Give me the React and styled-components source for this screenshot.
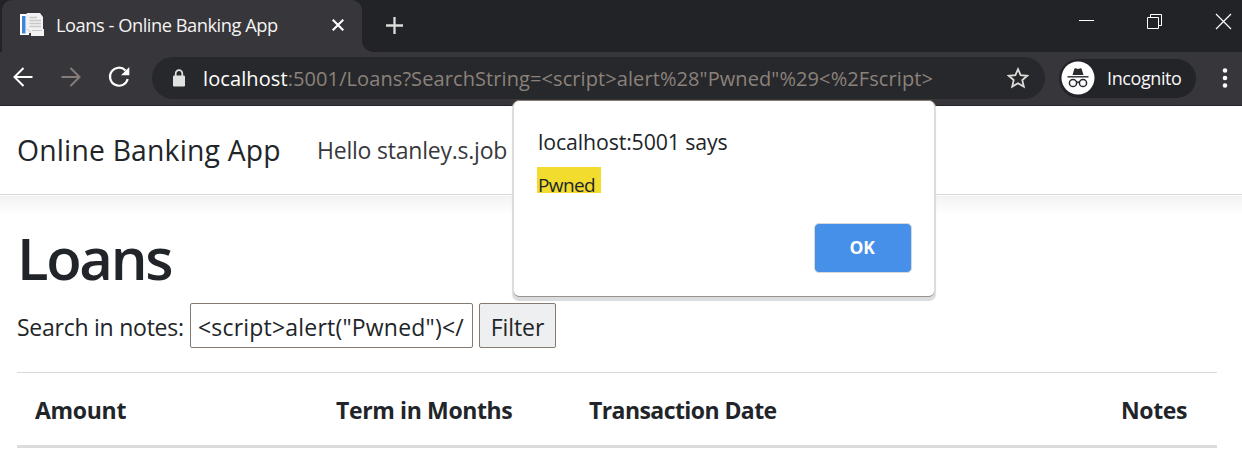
import React from "react";
import styled, { createGlobalStyle } from "styled-components";

const GlobalStyle = createGlobalStyle`
  * { box-sizing: border-box; }
  body {
    margin: 0;
    background: #fff;
    color: #212529;
    font-family: "Open Sans", "Noto Sans", sans-serif;
    overflow: hidden;
  }
`;

const Window = styled.div`
  position: relative;
  width: 1242px;
  height: 465px;
  overflow: hidden;
  background: #fff;
`;

const Label = styled.span`
  display: block;
  flex: none;
  white-space: pre;
  font-size: ${(p) => p.$size}px;
  line-height: ${(p) => p.$line}px;
  letter-spacing: ${(p) => p.$track || 0}px;
  font-weight: ${(p) => p.$weight || 400};
  color: ${(p) => p.$color || "#212529"};
`;

const TabStrip = styled.header`
  display: flex;
  height: 52px;
  background: #222327;
`;

const Tab = styled.div`
  position: relative;
  display: flex;
  width: 360px;
  height: 52px;
  margin-left: 2px;
  padding: 0 17px 2px 18px;
  align-items: center;
  background: #37363a;
  border-radius: 10px 10px 0 0;

  &::after {
    content: "";
    position: absolute;
    left: 100%;
    bottom: 0;
    width: 11px;
    height: 11px;
    background: radial-gradient(circle at 100% 0, transparent 10.5px, #37363a 11px);
  }
`;

const TabTitle = styled.div`
  width: 276px;
  margin-left: 12px;
  padding-bottom: 2px;
`;

const NewTab = styled.div`
  padding: 16px 0 0 23px;
`;

const WindowControls = styled.div`
  display: flex;
  margin-left: auto;
  padding: 13px 10px 0 0;
  gap: 52px;
`;

const Toolbar = styled.div`
  display: flex;
  height: 54px;
  padding: 0 14px 1px 12px;
  align-items: center;
  background: #37363a;
  border-bottom: 1px solid #222327;
`;

const Icon = styled.svg`
  display: block;
  flex: none;
`;

const NavButtons = styled.div`
  display: flex;
  width: 140px;
  padding-bottom: 2px;
  gap: 26px;
`;

const AddressBar = styled.div`
  display: flex;
  width: 893px;
  height: 42px;
  padding: 0 16px 0 20px;
  align-items: center;
  border-radius: 21px;
  background: #27282b;
`;

const Url = styled.div`
  display: flex;
  width: 821px;
  padding: 2px 0 0 17px;
`;

const Profile = styled.div`
  display: flex;
  width: 137px;
  height: 39px;
  margin-left: 14px;
  padding-left: 2px;
  align-items: center;
  gap: 12px;
  border-radius: 20px;
  background: #232428;
`;

const MenuDots = styled.div`
  margin: 0 0 0 auto;
`;

const SiteNav = styled.nav`
  display: flex;
  height: 89px;
  padding: 0 17px;
  align-items: center;
  border-bottom: 1px solid #d6d8da;
`;

const Greeting = styled.div`
  margin-left: 36px;
`;

const Brand = styled.div`
  width: 264px;
`;

const NavShadow = styled.div`
  height: 18px;
  margin-top: 1px;
  background: linear-gradient(#f2f2f2, #f9f9f9 50%, #fff);
`;

const Content = styled.main`
  padding: 0 25px 0 17px;
`;

const Heading = styled.div`
  height: 67px;
`;

const Filters = styled.form`
  display: flex;
  height: 45px;
  margin-top: 22px;
`;

const FilterLabel = styled.div`
  width: 173px;
  padding-top: 1px;
`;

const SearchBox = styled.div`
  width: 283px;
  height: 45px;
  padding-left: 7px;
  border: 1px solid #857a70;
  border-radius: 2px;
`;

const FilterButton = styled.div`
  display: flex;
  width: 77px;
  height: 45px;
  margin-left: 6px;
  justify-content: center;
  border: 1px solid #857a70;
  border-radius: 2px;
  background: #eeeff0;
`;

const TableHead = styled.div`
  display: grid;
  grid-template-columns: 301px 253px 532px 1fr;
  height: 76px;
  margin-top: 24px;
  padding: 2px 0 0 18px;
  align-items: start;
  border-top: 1px solid #d6d8da;
  border-bottom: 3px solid #dadcde;
`;

const Dialog = styled.section`
  position: absolute;
  left: 514px;
  top: 100px;
  width: 420px;
  height: 196px;
  padding: 24px 22px 0 24px;
  border-radius: 5px;
  background: #fff;
  box-shadow: 0 1px 0 0 #99938f, 0 3px 1px 2px #d9dbdd;
  border-top: 1px solid #857a70;
  clip-path: inset(0 -8px -8px -8px);
`;

const Highlight = styled.div`
  width: 64px;
  height: 26px;
  margin: 8px 0 0 -1px;
  padding: 1px 0 0 1px;
  background: #f2dd2e;
`;

const OkButton = styled.div`
  display: flex;
  width: 98px;
  height: 50px;
  margin: 30px 0 0 auto;
  padding: 0 2px 2px 0;
  align-items: center;
  justify-content: center;
  border: 1px solid #d6d8da;
  border-radius: 5px;
  background: #4690ea;
`;

const DocumentIcon = () => (
  <Icon width="24" height="24" viewBox="0 0 24 24">
    <path d="M0 1H9V22H0Z" fill="#fff" />
    <path d="M2 3H5.5V20.5H2Z" fill="#4087d8" />
    <path d="M7 0H20L23 4V16H24V23H11V20H6V2Z" fill="#f2f2f2" />
    <path d="M9.5 4.5H17M9.5 7.5H21M9.5 10.5H21M9.5 13.5H21" stroke="#c6c8ca" strokeWidth="1.6" />
    <path d="M7 16L11 19.5M12 17.5H22" stroke="#c6c8ca" />
  </Icon>
);

const IncognitoIcon = () => (
  <Icon width="34" height="34" viewBox="0 0 34 34">
    <circle cx="17" cy="17" r="16.5" fill="#fff" />
    <path d="M11.5 14L13.3 8Q13.6 7.2 14.4 7.3L17 8L19.6 7.3Q20.4 7.2 20.7 8L22.5 14Z" fill="#292a2e" />
    <path d="M6.5 15.8H27.5" stroke="#292a2e" strokeWidth="1.4" />
    <g fill="none" stroke="#292a2e" strokeWidth="1.5">
      <circle cx="12" cy="22" r="3.6" />
      <circle cx="22" cy="22" r="3.6" />
      <path d="M15.4 21.7Q17 20.5 18.6 21.7" />
    </g>
  </Icon>
);

export default function App() {
  return (
    <Window>
      <GlobalStyle />
      <TabStrip>
        <Tab>
          <DocumentIcon />
          <TabTitle>
            <Label $size={18.3} $line={47} $track={-0.48} $color="#f4f4f4">Loans - Online Banking App</Label>
          </TabTitle>
          <Icon width="12" height="12" viewBox="0 0 12 12" stroke="#fff" strokeWidth="2.1">
            <path d="M.7 .7L11.3 11.3M11.3 .7L.7 11.3" />
          </Icon>
        </Tab>
        <NewTab>
          <Icon width="19" height="19" viewBox="0 0 19 19" stroke="#dcdcdc" strokeWidth="2.3">
            <path d="M1 9.5H18M9.5 1V18" />
          </Icon>
        </NewTab>
        <WindowControls>
          <Icon width="17" height="17" viewBox="0 0 17 17" stroke="#fff">
            <path d="M2 7.5H17" />
          </Icon>
          <Icon width="17" height="17" viewBox="0 0 17 17" fill="none" stroke="#fff">
            <path d="M1.5 4.5H12.5V15.5H1.5ZM4.5 4.5V1.5H15.5V12.5H12.5" />
          </Icon>
          <Icon width="17" height="17" viewBox="0 0 17 17" stroke="#fff" strokeWidth="1.2">
            <path d="M1 1L16 16M16 1L1 16" />
          </Icon>
        </WindowControls>
      </TabStrip>
      <Toolbar>
        <NavButtons>
          <Icon width="22" height="22" viewBox="0 0 22 22" fill="none" stroke="#fff" strokeWidth="2">
            <path d="M20.5 11H3M11.5 2L2.5 11L11.5 20" />
          </Icon>
          <Icon width="22" height="22" viewBox="0 0 22 22" fill="none" stroke="#857d78" strokeWidth="2">
            <path d="M1.5 11H19M10.5 2L19.5 11L10.5 20" />
          </Icon>
          <Icon width="22" height="22" viewBox="0 0 22 22" fill="none">
            <path d="M17.5 4.5A9 9 0 1 0 19.7 13" stroke="#fff" strokeWidth="2.2" />
            <path d="M21.3 1V9.3H13Z" fill="#fff" />
          </Icon>
        </NavButtons>
        <AddressBar>
          <Icon width="14" height="18" viewBox="0 0 14 18">
            <path d="M3.7 7V4.5A3.3 3.3 0 0 1 10.3 4.5V7" fill="none" stroke="#e1e1e1" strokeWidth="1.7" />
            <rect x="1" y="6.5" width="12" height="11" rx="1.2" fill="#e1e1e1" />
          </Icon>
          <Url>
            <Label $size={20} $line={42} $track={0.1} $color="#fff">localhost</Label>
            <Label $size={20} $line={42} $track={0.09} $color="#8b827b">{':5001/Loans?SearchString=<script>alert%28"Pwned"%29<%2Fscript>'}</Label>
          </Url>
          <Icon width="22" height="22" viewBox="0 0 22 22" fill="none" stroke="#dedbd8" strokeWidth="1.8">
            <path d="M11 2.2L13.6 8.2L20.2 8.8L15.3 13.1L16.8 19.6L11 16.2L5.2 19.6L6.7 13.1L1.8 8.8L8.4 8.2Z" />
          </Icon>
        </AddressBar>
        <Profile>
          <IncognitoIcon />
          <Label $size={18} $line={39} $track={-0.4} $color="#f7f7f7">Incognito</Label>
        </Profile>
        <MenuDots>
          <Icon width="6" height="20" viewBox="0 0 6 20" fill="#fff">
            <circle cx="3" cy="2.5" r="2.3" />
            <circle cx="3" cy="10" r="2.3" />
            <circle cx="3" cy="17.5" r="2.3" />
          </Icon>
        </MenuDots>
      </Toolbar>
      <SiteNav>
        <Brand>
          <Label $size={28.3} $line={89} $track={0.2}>Online Banking App</Label>
        </Brand>
        <Greeting>
          <Label $size={23} $line={87} $track={-0.22} $color="#37383c">Hello stanley.s.job</Label>
        </Greeting>
      </SiteNav>
      <NavShadow />
      <Content>
        <Heading>
          <Label $size={58} $line={88} $track={-2.3} $weight={600}>Loans</Label>
        </Heading>
        <Filters>
          <FilterLabel>
            <Label $size={23} $line={46} $track={-0.25}>Search in notes:</Label>
          </FilterLabel>
          <SearchBox>
            <Label $size={23} $line={46} $track={0.2}>{'<script>alert("Pwned")</'}</Label>
          </SearchBox>
          <FilterButton>
            <Label $size={23} $line={46} $track={-0.1}>Filter</Label>
          </FilterButton>
        </Filters>
        <TableHead>
          <Label $size={23} $line={71} $weight={700} $track={-0.3}>Amount</Label>
          <Label $size={23} $line={71} $weight={700} $track={-0.37}>Term in Months</Label>
          <Label $size={23} $line={71} $weight={700} $track={-0.57}>Transaction Date</Label>
          <Label $size={23} $line={71} $weight={700} $track={-0.4}>Notes</Label>
        </TableHead>
      </Content>
      <Dialog>
        <Label $size={21.3} $line={34} $track={-0.12}>localhost:5001 says</Label>
        <Highlight>
          <Label $size={19} $line={34} $track={-0.6}>Pwned</Label>
        </Highlight>
        <OkButton>
          <Label $size={17.5} $line={46} $weight={700} $track={-0.3} $color="#fff">OK</Label>
        </OkButton>
      </Dialog>
    </Window>
  );
}
